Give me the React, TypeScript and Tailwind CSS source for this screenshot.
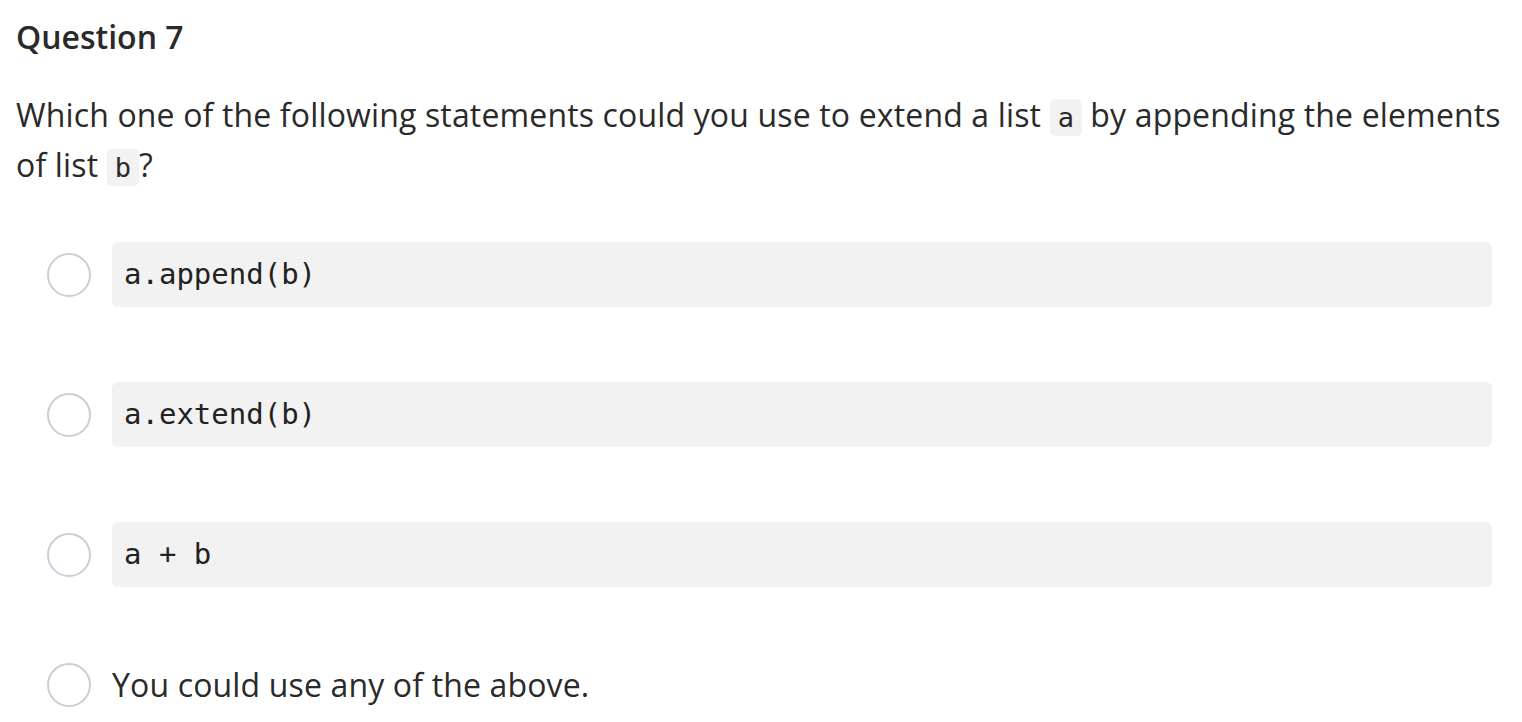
import React from 'react';

const sans = "font-['Open_Sans',sans-serif]";
const mono = "font-['DejaVu_Sans_Mono',monospace]";

function Code({ children }: { children: React.ReactNode }) {
  return (
    <code className={`${mono} inline-block align-baseline leading-[29px] text-[27px] bg-[#f2f2f2] rounded-[5px] px-[8px] py-[4px] -my-[4px] tracking-normal`}>
      {children}
    </code>
  );
}

function Radio() {
  return <span className="block w-[44px] h-[44px] shrink-0 rounded-full border-2 border-[#c7ced8] bg-white" />;
}

function CodeOption({ text }: { text: string }) {
  return (
    <div className="flex items-center gap-[21px] pl-[47px] pr-[30px]">
      <Radio />
      <div className={`flex-1 h-[65px] bg-[#f2f2f2] rounded-[6px] flex items-center px-[12px] ${mono} text-[29px] text-[#222] whitespace-pre`}>
        {text}
      </div>
    </div>
  );
}

export default function App() {
  const options = ['a.append(b)', 'a.extend(b)', 'a + b'];
  return (
    <div className={`min-h-screen bg-white text-[#2a2a2a] ${sans}`}>
      <div className="pl-[16px] pt-[13px]">
        <h2 className="text-[32px] font-semibold leading-[48px]">Question 7</h2>
        <p className="mt-[29px] text-[32px] leading-[50px] tracking-[0.15px] pr-[14px]">
          Which one of the following statements could you use to extend a list <Code>a</Code> by appending the elements of list <Code>b</Code>?
        </p>
      </div>
      <div className="mt-[52px] flex flex-col gap-[75px]">
        {options.map((o) => (
          <CodeOption key={o} text={o} />
        ))}
        <div className="flex items-center gap-[21px] pl-[47px] -mt-[1px]">
          <Radio />
          <span className="text-[32px] tracking-[0.15px]">You could use any of the above.</span>
        </div>
      </div>
    </div>
  );
}
